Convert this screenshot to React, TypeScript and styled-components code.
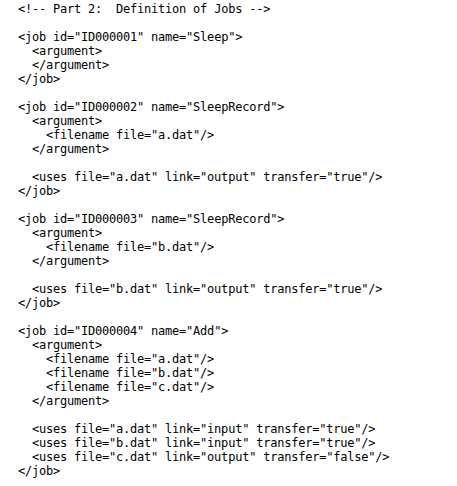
import React from "react";
import styled, { createGlobalStyle } from "styled-components";

const Global = createGlobalStyle`
  html, body { margin: 0; padding: 0; background: #ffffff; }
`;

const Page = styled.div`
  width: 457px;
  height: 486px;
  background: #ffffff;
  padding: 2px 0 0 18px;
  box-sizing: border-box;
`;

const Listing = styled.div`
  display: flex;
  flex-direction: column;
  font-family: "DejaVu Sans Mono", "Liberation Mono", monospace;
  font-size: 12px;
  letter-spacing: -0.22px;
  line-height: 14px;
  color: #000000;
`;

const Line = styled.div<{ $indent: number }>`
  height: 14px;
  white-space: pre;
  padding-left: ${(p) => p.$indent * 7}px;
`;

const lines: string[] = [
  `<!-- Part 2:  Definition of Jobs -->`,
  ``,
  `<job id="ID000001" name="Sleep">`,
  `  <argument>`,
  `  </argument>`,
  `</job>`,
  ``,
  `<job id="ID000002" name="SleepRecord">`,
  `  <argument>`,
  `    <filename file="a.dat"/>`,
  `  </argument>`,
  ``,
  `  <uses file="a.dat" link="output" transfer="true"/>`,
  `</job>`,
  ``,
  `<job id="ID000003" name="SleepRecord">`,
  `  <argument>`,
  `    <filename file="b.dat"/>`,
  `  </argument>`,
  ``,
  `  <uses file="b.dat" link="output" transfer="true"/>`,
  `</job>`,
  ``,
  `<job id="ID000004" name="Add">`,
  `  <argument>`,
  `    <filename file="a.dat"/>`,
  `    <filename file="b.dat"/>`,
  `    <filename file="c.dat"/>`,
  `  </argument>`,
  ``,
  `  <uses file="a.dat" link="input" transfer="true"/>`,
  `  <uses file="b.dat" link="input" transfer="true"/>`,
  `  <uses file="c.dat" link="output" transfer="false"/>`,
  `</job>`,
];

export default function App() {
  return (
    <>
      <Global />
      <Page>
        <Listing>
          {lines.map((l, i) => {
            const trimmed = l.replace(/^ +/, "");
            const indent = l.length - trimmed.length;
            return (
              <Line key={i} $indent={indent}>
                {trimmed || "\u00a0"}
              </Line>
            );
          })}
        </Listing>
      </Page>
    </>
  );
}
